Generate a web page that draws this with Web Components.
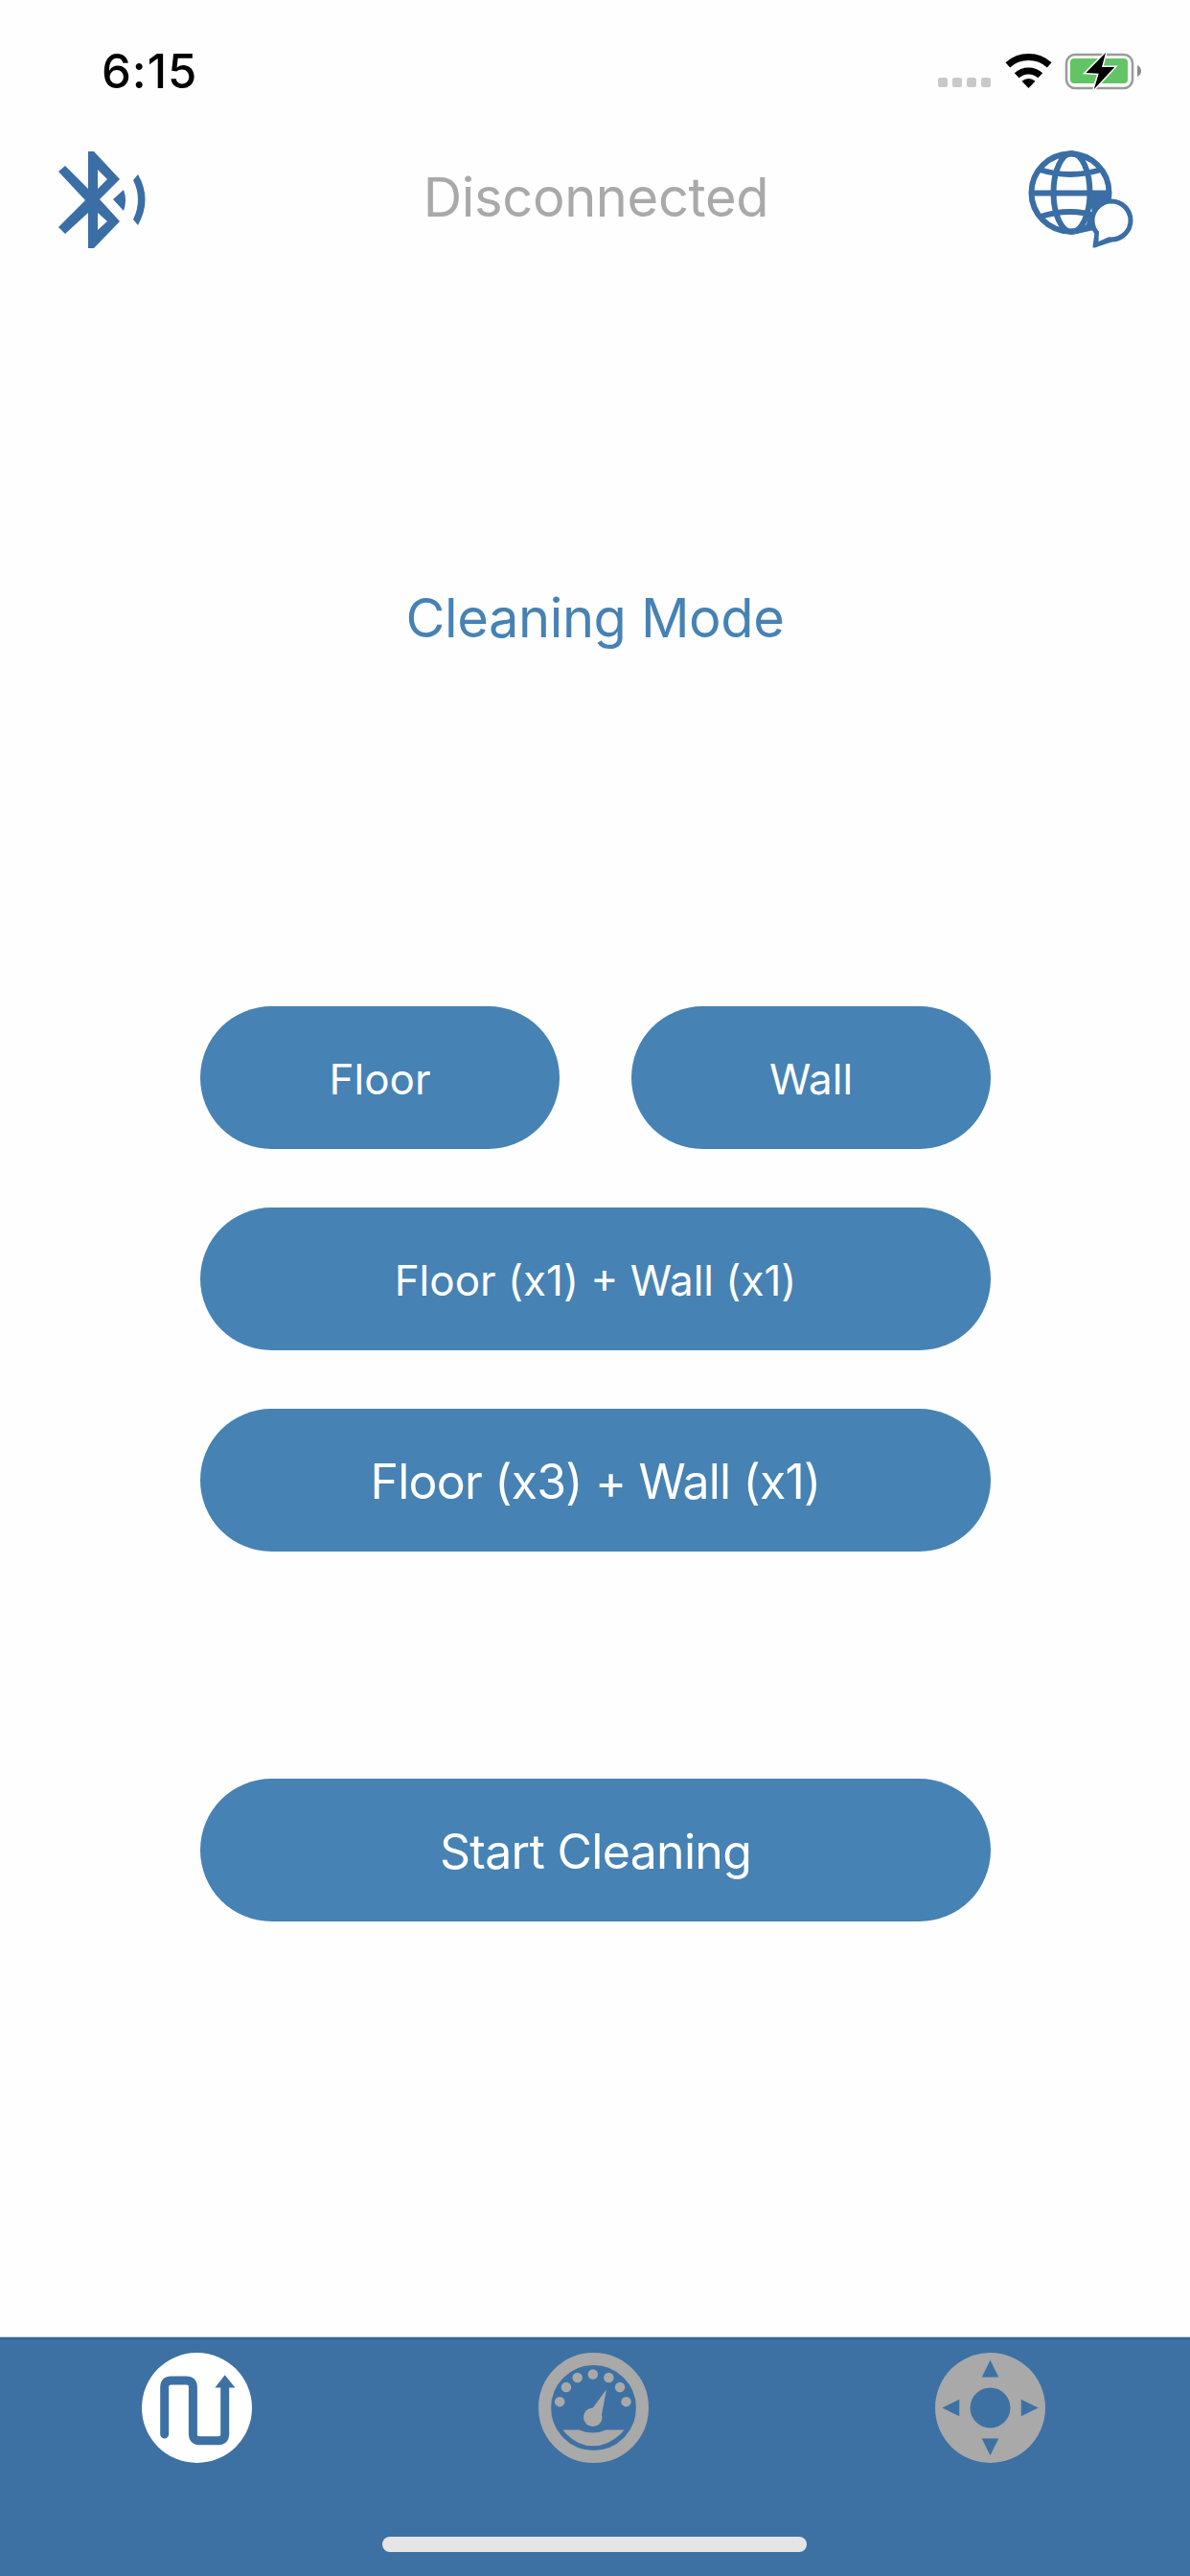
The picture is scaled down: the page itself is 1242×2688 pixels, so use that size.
<!doctype html>
<html>
<head>
<meta charset="utf-8">
<title>Cleaning Mode</title>
<style>
  html, body { margin: 0; background: #fefefe; }
  body { width: 1242px; height: 2688px; overflow: hidden; font-family: Inter, "Noto Sans", sans-serif; }
</style>
</head>
<body>
<robot-app></robot-app>
<script>
/* Robot cleaner remote, cleaning mode screen. Vanilla custom elements, one per
 * piece of the screen. The svg viewBoxes use page pixels for the top icons so
 * the numbers can be read straight off the reference. */
(function () {
  const STEEL = '#4682b4', BAR = '#3d71a4', ICON = '#3a6ea5', GREY = '#a9a9a9';
  const FONT = 'Inter, "Noto Sans", sans-serif';

  function define(name, html) {
    customElements.define(name, class extends HTMLElement {
      connectedCallback() {
        if (this.shadowRoot) return;
        this.attachShadow({ mode: 'open' }).innerHTML = html;
      }
    });
  }

  define('status-bar', `
    <style>
      :host { display:flex; align-items:flex-start; justify-content:space-between; height:110px;
              box-sizing:border-box; padding:0 51px 0 106px; font-family:${FONT}; }
      .time { margin-top:46px; font-size:49px; line-height:58px; font-weight:500; color:#000; letter-spacing:1px; }
      svg { display:block; margin-top:52px; }
    </style>
    <span class="time">6:15</span>
    <svg width="216" height="44" viewBox="975 52 216 44">
      <g fill="#c9c9c9">
        <rect x="979" y="81" width="10" height="10" rx="2.5"/><rect x="994" y="81" width="10" height="10" rx="2.5"/>
        <rect x="1009" y="81" width="10" height="10" rx="2.5"/><rect x="1024" y="81" width="10" height="10" rx="2.5"/>
      </g>
      <path d="M1051.8 67.9 A32.5 32.5 0 0 1 1095.2 67.9" fill="none" stroke="#000" stroke-width="7"/>
      <path d="M1061.2 78.8 A18 18 0 0 1 1085.8 78.8" fill="none" stroke="#000" stroke-width="7"/>
      <path d="M1066.5 84.8 A10 10 0 0 1 1080.5 84.8 L1073.5 92 Z" fill="#000"/>
      <rect x="1113" y="57" width="69" height="35" rx="9" fill="none" stroke="#9a9a9a" stroke-width="2.5"/>
      <rect x="1117" y="61" width="60" height="26" rx="4" fill="#63c466"/>
      <path d="M1187 68 Q1191 70 1191 74 Q1191 78 1187 80 Z" fill="#8a8a8a"/>
      <path d="M1154 55 L1133.3 76 L1146.7 76.7 L1141.7 93.3 L1163.3 70 L1150 70 Z" fill="#000" stroke="#fefefe" stroke-width="3" paint-order="stroke"/>
    </svg>`);

  define('app-header', `
    <style>
      :host { display:flex; align-items:flex-start; height:152px;
              box-sizing:border-box; padding:45px 58px 0 60px; font-family:${FONT}; }
      svg { display:block; flex:none; }
      .state { flex:1; text-align:center; margin-left:17px; font-size:56px; line-height:68px; margin-top:17px; color:${GREY}; letter-spacing:-.35px; }
    </style>
    <svg width="95" height="107" viewBox="60 155 95 107">
      <path fill-rule="evenodd" fill="${ICON}" d="M92 158 L98 158 L125 187 L104 208 L125 231 L98 259 L92 259 V222 L68 244 L61 237 L89 209 L61 179 L68 173 L92 197 Z
        M102 177 L112 187 L102 197 Z M102 222 L112 231 L102 240 Z"/>
      <path d="M118 208 L129 198 Q133 209 129 220 Z" fill="${ICON}"/>
      <path d="M144 182 Q159 208 144 235 L139 229 Q149 208 139 188 Z" fill="${ICON}"/>
    </svg>
    <span class="state">Disconnected</span>
    <svg width="112" height="106" viewBox="1072 155 112 106">
      <g fill="none" stroke="${ICON}" stroke-width="6">
        <circle cx="1117" cy="201" r="40.5"/>
        <ellipse cx="1118.5" cy="201" rx="19" ry="41"/>
        <path d="M1077 201.5 H1157"/>
        <path d="M1085 177 Q1117 187 1149 177"/>
        <path d="M1086 226 Q1117 216 1146 226"/>
      </g>
      <path d="M1136 201 H1158 L1153 218 L1140 222 Z M1136 222 L1146 222 L1142 240 L1128 243 Q1136 235 1136 222 Z" fill="${ICON}"/>
      <path d="M1144 243 L1142 257 L1160 251 Z" fill="${ICON}" stroke="${ICON}" stroke-width="3" stroke-linejoin="round"/>
      <circle cx="1160" cy="230" r="20" fill="#fefefe" stroke="${ICON}" stroke-width="5"/>
      <path d="M1147 241 L1146.5 252 L1158 247 Z" fill="#fefefe"/>
    </svg>`);

  define('screen-title', `
    <style>
      :host { display:block; height:788px; box-sizing:border-box; padding-top:349px; text-align:center;
              font-family:${FONT}; font-size:56px; line-height:68px; color:${STEEL}; letter-spacing:-.4px; }
    </style>
    <slot></slot>`);

  define('pill-button', `
    <style>
      :host { display:flex; align-items:center; justify-content:center; height:149px; border-radius:75px;
              background:${STEEL}; color:#fff; font-family:${FONT}; font-size:var(--fs, 44px); letter-spacing:var(--ls, 0);
              padding-top:2px; box-sizing:border-box; }
      :host([wide]) { grid-column:1 / span 2; }
    </style>
    <slot></slot>`);

  define('mode-buttons', `
    <style>
      :host { display:grid; grid-template-columns:375px 375px; column-gap:75px; row-gap:61px;
              width:825px; margin-left:209px; }
    </style>
    <slot></slot>`);

  define('tab-bar', `
    <style>
      :host { display:block; height:249px; margin-top:auto; box-sizing:border-box; background:${BAR};
              border-top:2px solid #2e66a3; box-shadow:0 -1px 0 #c6d3e1; padding-top:14px; }
      .tabs { display:flex; justify-content:space-between; padding:0 151px 0 148px; }
      svg { display:block; }
      .home { width:443px; height:16px; border-radius:8px; background:#e5e5e5; margin:77px auto 0; position:relative; left:-1px; }
    </style>
    <div class="tabs">
      <svg width="115" height="115" viewBox="0 0 115 115">
        <circle cx="57.5" cy="57.5" r="57.5" fill="#fff"/>
        <path d="M23.7 85 V36 Q23.7 29 30.7 29 H46.4 Q53.4 29 53.4 36 V84.7 Q53.4 91.7 60.4 91.7 H79.7 Q86.7 91.7 86.7 84.7 V34"
              fill="none" stroke="${BAR}" stroke-width="9" stroke-linecap="round"/>
        <path d="M86.7 23.3 L97.4 36.5 H76.4 Z" fill="${BAR}"/>
      </svg>
      <svg width="115" height="115" viewBox="0 0 114 114">
        <circle cx="57" cy="57" r="50.5" fill="none" stroke="${GREY}" stroke-width="13"/>
        <g fill="${GREY}">
          <circle cx="22" cy="50.7" r="5.2"/><circle cx="28.7" cy="35.7" r="5.2"/><circle cx="40.3" cy="25.7" r="5.2"/>
          <circle cx="56.3" cy="22.3" r="5.2"/><circle cx="72.7" cy="25.7" r="5.2"/><circle cx="84.3" cy="35.7" r="5.2"/>
          <circle cx="90.7" cy="50.7" r="5.2"/>
          <circle cx="56.3" cy="66.7" r="9.7"/>
          <path d="M56 57.5 L70.3 38 L65.5 64 Z"/>
          <path d="M25.3 79.7 H42 Q56 86 70 79.7 H88.7 Q75 96.5 56.3 96.5 Q38 96.5 25.3 79.7 Z"/>
        </g>
      </svg>
      <svg width="115" height="115" viewBox="0 0 114 114">
        <circle cx="57" cy="57" r="57" fill="${GREY}"/>
        <g fill="${BAR}">
          <circle cx="57" cy="57" r="20.8"/>
          <path d="M57 7.7 L65.7 25.3 H48.3 Z"/>
          <path d="M57 106.3 L65.7 88.7 H48.3 Z"/>
          <path d="M7.3 57 L25 48.3 V65.7 Z"/>
          <path d="M106.7 57 L89 48.3 V65.7 Z"/>
        </g>
      </svg>
    </div>
    <div class="home"></div>`);

  define('robot-app', `
    <style>
      :host { display:flex; flex-direction:column; height:2688px; background:#fefefe; }
      .start { --fs:50px; --ls:-.7px; margin:237px 0 0 209px; width:825px; }
      .x3 { --fs:50px; --ls:-.8px; }
    </style>
    <status-bar></status-bar>
    <app-header></app-header>
    <screen-title>Cleaning Mode</screen-title>
    <mode-buttons>
      <pill-button>Floor</pill-button>
      <pill-button>Wall</pill-button>
      <pill-button wide>Floor (x1) + Wall (x1)</pill-button>
      <pill-button wide class="x3">Floor (x3) + Wall (x1)</pill-button>
    </mode-buttons>
    <pill-button class="start">Start Cleaning</pill-button>
    <tab-bar></tab-bar>`);
})();
</script>
</body>
</html>
